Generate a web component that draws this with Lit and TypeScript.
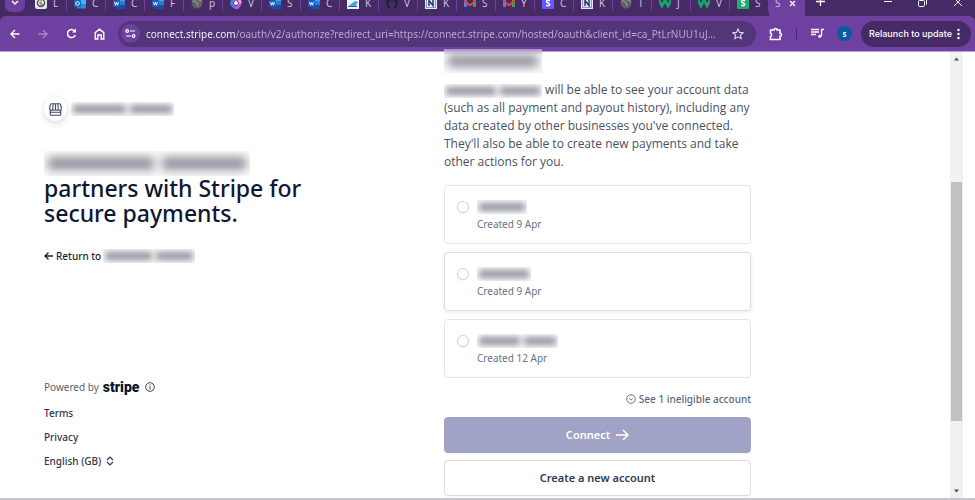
import { LitElement, html, svg, css, nothing } from "lit";
import { customElement } from "lit/decorators.js";

type Tab = { icon: string; title: string };

const TABS: Tab[] = [
  { icon: "gpt", title: "L" },
  { icon: "outlook", title: "C" },
  { icon: "word", title: "C" },
  { icon: "word", title: "F" },
  { icon: "globe", title: "p" },
  { icon: "copilot", title: "V" },
  { icon: "word", title: "S" },
  { icon: "word", title: "C" },
  { icon: "photo", title: "K" },
  { icon: "github", title: "V" },
  { icon: "note", title: "K" },
  { icon: "gmail", title: "S" },
  { icon: "gmail", title: "Y" },
  { icon: "stripe", title: "C" },
  { icon: "note", title: "K" },
  { icon: "globe", title: "T" },
  { icon: "wgreen", title: "J" },
  { icon: "wgreen", title: "V" },
  { icon: "sgreen", title: "S" },
];

const FAVICONS: Record<string, unknown> = {
  gpt: svg`<rect width="12" height="12" rx="2" fill="#e9e9ea"/><circle cx="6" cy="6" r="3.600" fill="none" stroke="#555" stroke-width="1.400"/><path d="M3 7.500 6 9l3-1.500M6 3v6M3.500 5 8.500 8" stroke="#555" stroke-width=".7" fill="none"/>`,
  outlook: svg`<rect x="3" y="1" width="9" height="9" fill="#35b8f1"/><path d="M3 7h9v4.500H3z" fill="#1c8fe0"/><rect y="3" width="7" height="7" rx="1" fill="#0f6cbd"/><circle cx="3.500" cy="6.500" r="1.800" fill="none" stroke="#fff"/>`,
  word: svg`<rect x="3" width="9" height="12" rx="1" fill="#41a5ee"/><path d="M3 4h9v4H3z" fill="#2b7cd3"/><path d="M3 8h9v3a1 1 0 0 1-1 1H4a1 1 0 0 1-1-1z" fill="#174ea6"/><rect y="3" width="7" height="7" rx="1" fill="#185abd"/><path d="m1.500 4.800 1 3.400 1-2.800 1 2.800 1-3.400" fill="none" stroke="#fff" stroke-width=".9"/>`,
  globe: svg`<circle cx="6" cy="6" r="5.500" fill="#5f5f68"/><path d="M1.500 4.500c3-2 3 1 4.500 1.500s0 2 1 3M7 1c-1 2 2 2 4 3.500" stroke="#8a938a" stroke-width="1.400" fill="none"/>`,
  copilot: svg`<path d="M3 2.500 1.500 6.500l3 4" stroke="#4f7df0" stroke-width="3" fill="none" stroke-linejoin="round"/><path d="M4.500 10.500h3l3-4" stroke="#b45ae8" stroke-width="3" fill="none" stroke-linejoin="round"/><path d="M10.500 6.500 9 2H4" stroke="#e79bcf" stroke-width="3" fill="none" stroke-linejoin="round"/><circle cx="6" cy="6" r="2" fill="#f5efff"/>`,
  photo: svg`<rect width="12" height="12" fill="#eef4fa"/><path d="M2 8.500 8 4l3 1-3 5z" fill="#4aa3dd"/><path d="M1 9.500h9" stroke="#2465ad"/>`,
  github: svg`<circle cx="6" cy="6" r="6" fill="#24202e"/><path d="M4.300 12V9.500C2 9 2.300 4 4 3.500L6 4l2-.5c1.700.5 2 5.500-.3 6V12z" fill="#462a66"/>`,
  note: svg`<rect width="12" height="12" fill="#e6e8f5"/><rect x="1.500" y="1.500" width="9" height="9" fill="none" stroke="#6272a8" stroke-width=".7"/><path d="M4 9V3.500l4 5V3" stroke="#25386f" stroke-width="1.500" fill="none"/>`,
  gmail: svg`<path d="M0 2h3v8H1a1 1 0 0 1-1-1z" fill="#4285f4"/><path d="M9 2h3v7a1 1 0 0 1-1 1H9z" fill="#34a853"/><path d="M0 2.500 6 7l6-4.500V5L6 9.500 0 5z" fill="#ea4335"/>`,
  stripe: svg`<rect width="12" height="12" rx="1" fill="#635bff"/><path d="M8 3.800C6.500 3 4.500 3.200 4.500 4.600c0 1.600 3.200 1.200 3.200 2.800 0 1.500-2.200 1.500-3.500.7" stroke="#fff" stroke-width="1.500" fill="none"/>`,
  sgreen: svg`<rect width="12" height="12" rx="1" fill="#1fae6b"/><path d="M8 3.800C6.500 3 4.500 3.200 4.500 4.600c0 1.600 3.200 1.200 3.200 2.800 0 1.500-2.200 1.500-3.500.7" stroke="#fff" stroke-width="1.500" fill="none"/>`,
  wgreen: svg`<path d="m0 3 3 6 3-6 3 6 3-6" stroke="#16a867" stroke-width="2.600" fill="none"/>`,
};

@customElement("browser-bar")
class BrowserBar extends LitElement {
  static styles = css`
    :host { display: block; background: #462a66; font: 10px/16px "Noto Sans", "Open Sans", sans-serif; color: #fff; }
    button { font: inherit; color: inherit; background: none; border: 0; padding: 0; margin: 0; display: grid; place-items: center; flex: none; }
    svg { display: block; flex: none; }
    .strip { display: flex; align-items: flex-end; height: 16px; overflow: hidden; }
    .search { width: 20px; height: 24px; margin: 0 3px 4px 5px; background: #6e40a0; border-radius: 7px; padding-top: 6px; }
    .tab { display: flex; align-items: center; gap: 6px; width: 39px; height: 26px; padding-left: 7px; box-sizing: border-box; flex: none; color: #cdbfe0; border-right: 1px solid #6e40a0; border-image: linear-gradient(#6e40a0 20px, transparent 20px) 1; text-align: left; }
    .active { display: flex; align-items: center; width: 36px; height: 26px; background: #6e40a0; border-radius: 6px 6px 0 0; gap: 8px; padding-left: 6px; box-sizing: border-box; color: #cdbfe0; flex: none; }
    .new { width: 30px; height: 30px; }
    .win { display: flex; margin-left: auto; }
    .win button { width: 35px; height: 28px; }
    .bar { display: flex; align-items: center; height: 36px; box-sizing: border-box; background: #6e40a0; border-radius: 6px 6px 0 0; border-bottom: 1px solid #b9a2d4; padding: 0 4px 0 1px; }
    .nav { width: 28px; height: 28px; }
    .dim { color: #a98bca; }
    .pill { display: flex; align-items: center; flex: 1; min-width: 0; height: 26px; margin-left: 5px; padding: 0 12px 0 3px; border-radius: 13px; background: #533579; box-sizing: border-box; }
    .site { width: 19px; height: 19px; border-radius: 50%; background: #6e40a0; }
    .url { flex: 1; min-width: 0; margin: 0 4px 0 6px; padding: 0; border: 0; outline: 0; font: 10px/20px "Noto Sans", "Open Sans", sans-serif; color: transparent; background: linear-gradient(to right, #fff 89px, #bfaed4 89px); -webkit-background-clip: text; background-clip: text; }
    .ext { width: 40px; height: 28px; }
    .sep { width: 1px; height: 12px; background: #462a66; }
    .queue { width: 40px; height: 28px; }
    .avatar { width: 15px; height: 15px; border-radius: 50%; background: #0a5aa0; font-size: 8px; line-height: 14px; font-weight: 600; }
    .update { display: flex; align-items: center; justify-content: space-between; width: 110px; height: 26px; margin-left: 9px; border-radius: 13px; background: #462a66; padding: 0 11px 0 8px; font: 500 9px/16px Inter, "Open Sans", sans-serif; white-space: nowrap; }
  `;

  render() {
    return html`
      <div class="strip">
        <button class="search" aria-label="Search tabs">
          <svg width="8" height="6" fill="none" stroke="#fff" stroke-width="1.500"><path d="m1 1 3 3 3-3"/></svg>
        </button>
        ${TABS.map((t) => html`<button class="tab"><svg width="12" height="12">${FAVICONS[t.icon] ?? nothing}</svg><span>${t.title}</span></button>`)}
        <div class="active"><span>S</span>
          <button aria-label="Close tab"><svg width="7" height="7" stroke="#fff" stroke-width="1.200"><path d="m1 1 5 5M6 1 1 6"/></svg></button>
        </div>
        <button class="new" aria-label="New tab"><svg width="9" height="9" stroke="#fff" stroke-width="1.300"><path d="M4.500 0v9M0 4.500h9"/></svg></button>
        <div class="win">
          <button aria-label="Minimise"><svg width="8" height="8" stroke="#fff"><path d="M0 3.500h8"/></svg></button>
          <button aria-label="Restore"><svg width="9" height="9" fill="none" stroke="#fff"><rect x=".5" y="2.500" width="6" height="6" rx="1"/><path d="M2.500.5h5a1 1 0 0 1 1 1v5"/></svg></button>
          <button aria-label="Close"><svg width="8" height="8" stroke="#fff"><path d="m0 0 8 8M8 0 0 8"/></svg></button>
        </div>
      </div>
      <div class="bar">
        <button class="nav" aria-label="Back"><svg width="10" height="10" fill="none" stroke="currentColor" stroke-width="1.400"><path d="M9.500 5H1M5 1 1 5l4 4"/></svg></button>
        <button class="nav dim" aria-label="Forward"><svg width="10" height="10" fill="none" stroke="currentColor" stroke-width="1.300"><path d="M.5 5H9M5 1l4 4-4 4"/></svg></button>
        <button class="nav" aria-label="Reload"><svg width="11" height="11" fill="none" stroke="currentColor" stroke-width="1.500"><path d="M9.300 7A4 4 0 1 1 8.600 3"/><path d="M10 .5v4H6z" fill="currentColor" stroke="none"/></svg></button>
        <button class="nav" aria-label="Home"><svg width="11" height="12" fill="none" stroke="currentColor" stroke-width="1.400"><path d="M1.200 11V4.600L5.500 1.200l4.300 3.400V11H7.200V7H3.800v4z"/></svg></button>
        <div class="pill">
          <button class="site" aria-label="Site information"><svg width="11" height="9" fill="none" stroke="currentColor" stroke-width="1.200"><circle cx="2.200" cy="2" r="1.300"/><path d="M5 2h5M1 7h5"/><circle cx="8.600" cy="7" r="1.300"/></svg></button>
          <input class="url" aria-label="Address" readonly value="connect.stripe.com/oauth/v2/authorize?redirect_uri=https://connect.stripe.com/hosted/oauth&client_id=ca_PtLrNUU1uJ..." />
          <button aria-label="Bookmark"><svg width="12" height="12" viewBox="0 0 12 12" fill="none" stroke="#e0d4ef" stroke-width="1.100"><path d="m6 1 1.500 3.400 3.600.3-2.700 2.400.8 3.600L6 8.800l-3.200 1.900.8-3.600L.9 4.700l3.600-.3z"/></svg></button>
        </div>
        <button class="ext" aria-label="Extensions"><svg width="14" height="14" fill="none" stroke="currentColor" stroke-width="1.500"><path d="M1.500 3H5a1.500 1.500 0 0 1 3 0h3v3.200a1.500 1.500 0 0 1 0 3V12.500H1.500V9.500a1.700 1.700 0 0 0 0-3.200z"/></svg></button>
        <span class="sep"></span>
        <button class="queue" aria-label="Media controls"><svg width="13" height="11" fill="none" stroke="currentColor" stroke-width="1.300"><path d="M0 1.500h8M0 4h8M0 6.500h5"/><path d="M13 1.500h-2.500V8"/><circle cx="8.800" cy="8.300" r="1.500" fill="currentColor" stroke="none"/></svg></button>
        <button class="avatar" aria-label="Profile">s</button>
        <button class="update"><span>Relaunch to update</span><svg width="3" height="12" fill="#fff"><circle cx="1.500" cy="2" r="1.200"/><circle cx="1.500" cy="6" r="1.200"/><circle cx="1.500" cy="10" r="1.200"/></svg></button>
      </div>`;
  }
}

@customElement("hidden-name")
class HiddenName extends LitElement {
  static styles = css`
    :host { display: inline-flex; flex: none; gap: 4px; overflow: hidden; box-sizing: border-box; vertical-align: middle; padding: 3px 2px; height: 14px; width: 100px; background: #fafafb; }
    .word { flex: 5; background: #777986; filter: blur(3px); opacity: .8; }
    .word + .word { flex: 4; }
    :host([single]) .word + .word { display: none; }
    :host([large]) { padding: 6px 4px; gap: 8px; }
    :host([large]) .word { filter: blur(5px); opacity: .8; }
  `;
  render() {
    return html`<span class="word"></span><span class="word"></span>`;
  }
}

const ACCOUNTS = [
  { id: "a1", size: "n1", single: true, created: "Created 9 Apr" },
  { id: "a2", size: "n2", single: true, created: "Created 9 Apr", raised: true },
  { id: "a3", size: "n3", single: false, created: "Created 12 Apr" },
];

@customElement("app-root")
class AppRoot extends LitElement {
  static styles = css`
    :host { display: flex; flex-direction: column; min-height: 100vh; box-sizing: border-box; background: #fff; border-bottom: 2px solid #c8c6cd; font: 10px/18px "Noto Sans", "Open Sans", sans-serif; color: #414552; }
    a { color: inherit; text-decoration: none; }
    svg { display: block; flex: none; }
    .view { display: flex; flex: 1; }
    .page { flex: 1; display: grid; grid-template-columns: 400fr 307fr; padding: 0 199px 0 44px; }
    .left { display: flex; flex-direction: column; align-items: flex-start; padding-top: 45px; color: #1a1f36; }
    .brand { display: flex; align-items: center; gap: 4px; }
    .logo { display: grid; place-items: center; width: 23px; height: 24px; border-radius: 50%; box-shadow: 0 2px 6px #3c425733; background: #fff; }
    .brand hidden-name { width: 103px; }
    h1 { margin: 30px 0 0; font-size: 23px; line-height: 25px; font-weight: 500; color: #0f1735; }
    h1 hidden-name { display: flex; width: 206px; height: 25px; }
    .return { display: flex; align-items: center; gap: 2px; margin-top: 21px; font-weight: 500; }
    .return hidden-name { width: 92px; }
    .foot { margin-top: auto; padding-bottom: 28px; display: flex; flex-direction: column; align-items: flex-start; gap: 6px; font-weight: 500; color: #30364e; }
    .powered { display: flex; align-items: center; gap: 4px; margin-bottom: 2px; color: #596171; font-weight: 400; }
    .wordmark { font: 900 14px/18px Roboto, "Open Sans", sans-serif; color: #0a1433; }
    .info { margin-left: 2px; padding: 0; border: 0; background: none; color: #414552; }
    .lang { display: flex; align-items: center; gap: 4px; }
    select { appearance: none; border: 0; background: none; padding: 0; margin: 0; font: inherit; color: inherit; }
    .right { display: flex; flex-direction: column; padding-bottom: 2px; }
    .title { width: 98px; height: 24px; margin-top: -3px; position: relative; background: linear-gradient(#a98cc8, #fafafc 6px); }
    .intro { margin: 8px 0 14px; font: 12px/18px "Open Sans", "Noto Sans", sans-serif; color: #4a4f62; }
    .intro hidden-name { width: 98px; }
    .cards { display: flex; flex-direction: column; gap: 8px; border: 0; margin: 0; padding: 0; }
    .card { display: flex; gap: 8px; height: 59px; box-sizing: border-box; padding: 13px 12px 0; border: 1px solid #e4e5ea; border-radius: 4px; }
    .raised { border-color: #dcdde3; box-shadow: 0 1px 4px #3c42571f; }
    .card input { appearance: none; flex: none; width: 12px; height: 12px; margin: 2px 0 0; border: 1px solid #cfd1d8; border-radius: 50%; background: #fff; box-shadow: 0 1px 1px #0000000f; box-sizing: border-box; }
    .who { display: flex; flex-direction: column; gap: 1px; padding-top: 1px; color: #6a7383; }
    .n1 { width: 50px; }
    .n2 { width: 54px; }
    .n3 { width: 81px; }
    .see { display: flex; align-items: center; align-self: flex-end; gap: 3px; margin: 12px 0 9px; padding: 0; border: 0; background: none; font: inherit; font-weight: 500; color: #596781; }
    .btn { display: flex; align-items: center; justify-content: center; gap: 6px; height: 36px; margin: 0 0 7px; border: 1px solid #dcdde3; border-radius: 4px; background: #fff; font: 600 11px/18px "Noto Sans", "Open Sans", sans-serif; color: #353a52; box-shadow: 0 1px 1px #0000000a; }
    .btn:last-child { margin: 0; }
    .connect { border-color: #a0a3c5; background: #a0a3c5; color: #fff; }
    .scroll { display: flex; flex-direction: column; align-items: center; width: 13px; margin-right: 12px; padding: 5px 0; box-sizing: border-box; background: #f1f1f1; }
    .track { flex: 1; align-self: stretch; display: flex; flex-direction: column; padding: 0 1px; }
    .track::before { content: ""; flex: 120; }
    .track::after { content: ""; flex: 68; }
    .thumb { flex: 238; background: #c1c1c1; }
  `;

  render() {
    return html`
      <browser-bar></browser-bar>
      <div class="view">
        <main class="page">
          <section class="left">
            <div class="brand">
              <span class="logo"><svg width="13" height="13" fill="none" stroke="#414a68" stroke-width="1.100"><path d="M2.500.7h8a1 1 0 0 1 1 .8l.8 3v1.300a1.400 1.400 0 0 1-2.900.3 1.500 1.500 0 0 1-2.900 0 1.500 1.500 0 0 1-2.900 0A1.400 1.400 0 0 1 .7 5.800V4.500l.8-3a1 1 0 0 1 1-.8zM4.200.7l-.5 5M8.800.7l.5 5M6.500.7v5M1.200 7.500v3.800a1 1 0 0 0 1 1h8.600a1 1 0 0 0 1-1V7.500M1.200 9.200h10.600"/></svg></span>
              <hidden-name></hidden-name>
            </div>
            <h1><hidden-name large></hidden-name>partners with Stripe for<br />secure payments.</h1>
            <a class="return" href="#"><svg width="10" height="10" fill="none" stroke="currentColor" stroke-width="1.300"><path d="M9 5H1M4.500 1.500 1 5l3.500 3.500"/></svg><span>Return to</span><hidden-name></hidden-name></a>
            <footer class="foot">
              <div class="powered"><span>Powered by</span><a class="wordmark" href="#">stripe</a>
                <button class="info" aria-label="About Stripe"><svg width="10" height="10" fill="none" stroke="currentColor"><circle cx="5" cy="5" r="4.300"/><path d="M5 4.300V7.500M5 2.400v1.100"/></svg></button></div>
              <a href="#">Terms</a>
              <a href="#">Privacy</a>
              <label class="lang"><select aria-label="Language"><option>English (GB)</option></select><svg width="8" height="10" fill="none" stroke="currentColor" stroke-width="1.200"><path d="m1 4 3-3 3 3M1 6l3 3 3-3"/></svg></label>
            </footer>
          </section>
          <section class="right">
            <hidden-name class="title" large single></hidden-name>
            <p class="intro"><hidden-name></hidden-name> will be able to see your account data (such as all payment and payout history), including any data created by other businesses you've connected. They'll also be able to create new payments and take other actions for you.</p>
            <fieldset class="cards" aria-label="Account">
              ${ACCOUNTS.map((a) => html`<label class="card ${a.raised ? "raised" : ""}" for=${a.id}>
                <input type="radio" name="account" id=${a.id} />
                <span class="who"><hidden-name class=${a.size} ?single=${a.single}></hidden-name><span>${a.created}</span></span>
              </label>`)}
            </fieldset>
            <button class="see"><svg width="10" height="10" fill="none" stroke="currentColor" stroke-width=".9"><circle cx="5" cy="5" r="4.300"/><path d="m3 4.200 2 2 2-2"/></svg>See 1 ineligible account</button>
            <button class="btn connect">Connect<svg width="13" height="12" fill="none" stroke="currentColor" stroke-width="1.500"><path d="M0 6h12M7 1l5 5-5 5"/></svg></button>
            <button class="btn">Create a new account</button>
          </section>
        </main>
        <div class="scroll" aria-hidden="true">
          <svg width="5" height="4" fill="#505050"><path d="M0 3.500 2.500.5 5 3.500z"/></svg>
          <div class="track"><div class="thumb"></div></div>
          <svg width="5" height="4" fill="#505050"><path d="M0 .5h5l-2.500 3z"/></svg>
        </div>
      </div>`;
  }
}
